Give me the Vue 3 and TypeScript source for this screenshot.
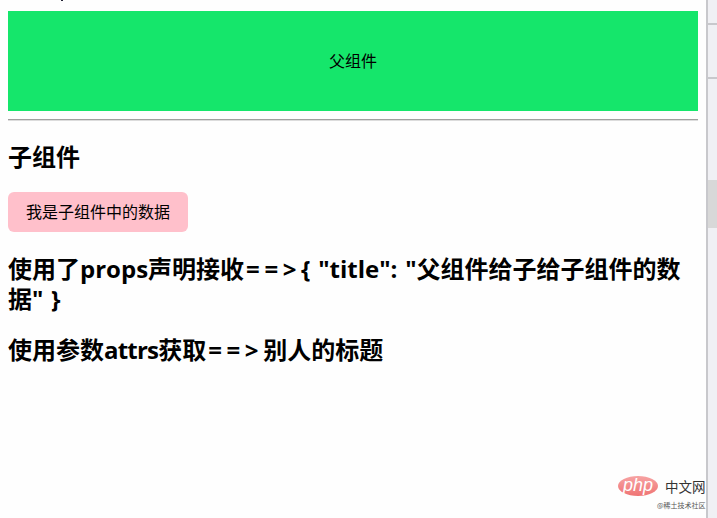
<template>
  <div class="screen">
    <main class="page">
      <i class="cut-off"></i>
      <section class="parent"><span class="cjk-nudge">父组件</span></section>
      <hr class="divider" />
      <h3 class="child-title">子组件</h3>
      <button class="data-btn"><span class="cjk-nudge">我是子组件中的数据</span></button>
      <h3 class="line first">使用了props声明接收<span class="arrow">==&gt;</span>{{ propsText }}</h3>
      <h3 class="line second">使用参数<span class="attrs">attrs</span>获取<span class="arrow">==&gt;</span>{{ attrsTitle }}</h3>
    </main>

    <aside class="rail">
      <div class="rail-seg top"></div>
      <div class="rail-seg mid"></div>
      <div class="rail-seg rest">
        <div class="thumb"></div>
      </div>
    </aside>

    <div class="watermark">
      <div class="brand">
        <svg class="logo" width="40" height="20" viewBox="0 0 40 20">
          <defs>
            <linearGradient id="php-fill" x1="0" y1="0" x2="0" y2="1">
              <stop offset="0" stop-color="#f7a3a3" />
              <stop offset="1" stop-color="#ef7474" />
            </linearGradient>
          </defs>
          <ellipse cx="20" cy="10" rx="20" ry="10" fill="url(#php-fill)" />
          <text x="20" y="14.5" text-anchor="middle" class="logo-text">php</text>
        </svg>
        <span class="brand-name">中文网</span>
      </div>
      <div class="brand-sub">@稀土技术社区</div>
    </div>
  </div>
</template>

<script setup lang="ts">
const propsText = '{ "title": "父组件给子给子组件的数据" }'
const attrsTitle = '别人的标题'
</script>

<style>
html,
body {
  margin: 0;
  background: #fff;
  overflow: hidden;
}
</style>

<style scoped>
.screen {
  display: flex;
  position: relative;
  width: 717px;
  height: 518px;
  overflow: hidden;
  color: #000;
  font-family: "Open Sans", "Noto Sans CJK SC", sans-serif;
}

.page {
  position: relative;
  box-sizing: border-box;
  width: 706px;
  padding: 11px 8px 0;
  background: #fefefe;
}

.cut-off {
  position: absolute;
  top: 0;
  left: 61px;
  width: 2px;
  height: 1px;
  background: #223;
}

.parent {
  display: flex;
  align-items: center;
  justify-content: center;
  height: 100px;
  background: #15e66b;
  font-size: 16px;
  font-family: "Noto Sans CJK SC", sans-serif;
}

.cjk-nudge {
  display: block;
  margin-top: -2px;
}

.divider {
  box-sizing: content-box;
  height: 1px;
  margin: 8px 0 0;
  border: 0;
  border-bottom: 1px solid #dcdcdc;
  background: #a0a0a0;
}

.child-title {
  margin: 19px 0 0;
  font-size: 24px;
  line-height: 33px;
}

.data-btn {
  display: block;
  width: 180px;
  height: 40px;
  margin-top: 19px;
  padding: 0;
  border: 0;
  border-radius: 6px;
  background: #ffc0cb;
  color: #000;
  font-family: "Noto Sans CJK SC", sans-serif;
  font-size: 16px;
}

.line {
  margin: 0;
  font-size: 24px;
  line-height: 30px;
  word-spacing: 1.5px;
}

.arrow {
  letter-spacing: 4.6px;
  margin-left: 2px;
}

.attrs {
  letter-spacing: -0.8px;
}

.first {
  margin-top: 22px;
}

.second {
  margin-top: 21px;
}

.rail {
  display: flex;
  flex-direction: column;
  width: 9px;
  border-left: 2px solid #c8c8cc;
  background: #f0f0f4;
}

.rail-seg {
  border-bottom: 2px solid #c8c8cc;
}

.top {
  height: 23px;
}

.mid {
  height: 52px;
}

.rest {
  flex: 1;
  border-bottom: 0;
  padding-top: 101px;
}

.thumb {
  height: 48px;
  background: #d8d8d8;
}

.watermark {
  position: absolute;
  left: 618px;
  top: 476px;
  width: 88px;
}

.brand {
  display: flex;
  align-items: center;
  gap: 7px;
}

.logo {
  flex: none;
}

.logo-text {
  fill: #fff;
  font-family: "Liberation Sans", sans-serif;
  font-size: 18px;
  font-style: italic;
}

.brand-name {
  color: #333;
  font-family: "Noto Sans CJK SC", sans-serif;
  font-size: 13.5px;
  line-height: 20px;
  white-space: nowrap;
}

.brand-sub {
  margin-top: 5px;
  padding-left: 39px;
  color: #555;
  font-family: "Noto Sans CJK SC", sans-serif;
  font-size: 7px;
  line-height: 9px;
  white-space: nowrap;
}
</style>
